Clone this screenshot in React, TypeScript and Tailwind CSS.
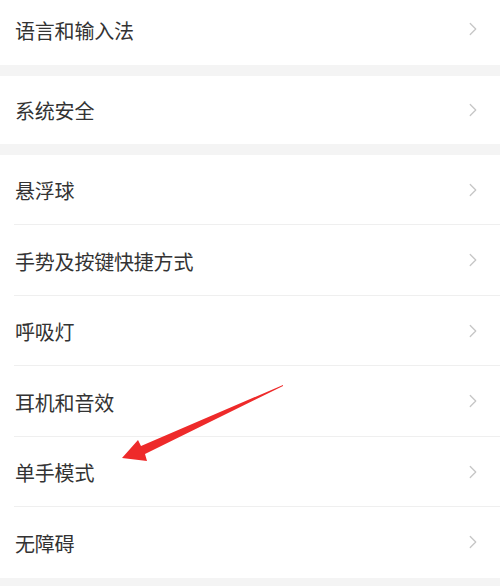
import { ChevronRight } from 'lucide-react';

type Row = { label: string };

const groups: { rows: Row[]; first?: boolean }[] = [
  { rows: [{ label: '语言和输入法' }], first: true },
  { rows: [{ label: '系统安全' }] },
  {
    rows: [
      { label: '悬浮球' },
      { label: '手势及按键快捷方式' },
      { label: '呼吸灯' },
      { label: '耳机和音效' },
      { label: '单手模式' },
      { label: '无障碍' },
    ],
  },
];

function SettingRow({ label, last, height }: { label: string; last: boolean; height: string }) {
  return (
    <div className={`relative flex items-center justify-between pl-[15px] pr-[16px] ${height}`}>
      <span className="pt-[3px] text-[20px] leading-none text-[#333333] tracking-[-0.2px]">{label}</span>
      <ChevronRight className="h-[22px] w-[22px] text-[#c6c6c6]" strokeWidth={1.4} />
      {!last && <div className="absolute bottom-0 left-[14px] right-0 h-px bg-[#efefef]" />}
    </div>
  );
}

// red pointer arrow drawn on top of the list
function Pointer() {
  return (
    <svg className="pointer-events-none absolute left-0 top-0" width="500" height="586" viewBox="0 0 500 586">
      <polygon
        points="283,385 141,446 138,440 122,458 147,461 145,454 283,386"
        fill="#ee2a2a"
      />
    </svg>
  );
}

export default function App() {
  return (
    <div
      className="relative h-[586px] w-[500px] overflow-hidden bg-[#f4f4f4]"
      style={{ fontFamily: '"Noto Sans CJK SC", "Noto Sans", sans-serif' }}
    >
      <div className="flex flex-col gap-[11px]">
        {groups.map((g, gi) => (
          <div key={gi} className={`bg-white ${g.first ? '-mt-[6px]' : ''}`}>
            {g.rows.map((r, ri) => (
              <SettingRow
                key={r.label}
                label={r.label}
                last={ri === g.rows.length - 1}
                height={gi === 1 ? 'h-[68px]' : 'h-[70.5px]'}
              />
            ))}
          </div>
        ))}
      </div>
      <Pointer />
    </div>
  );
}
